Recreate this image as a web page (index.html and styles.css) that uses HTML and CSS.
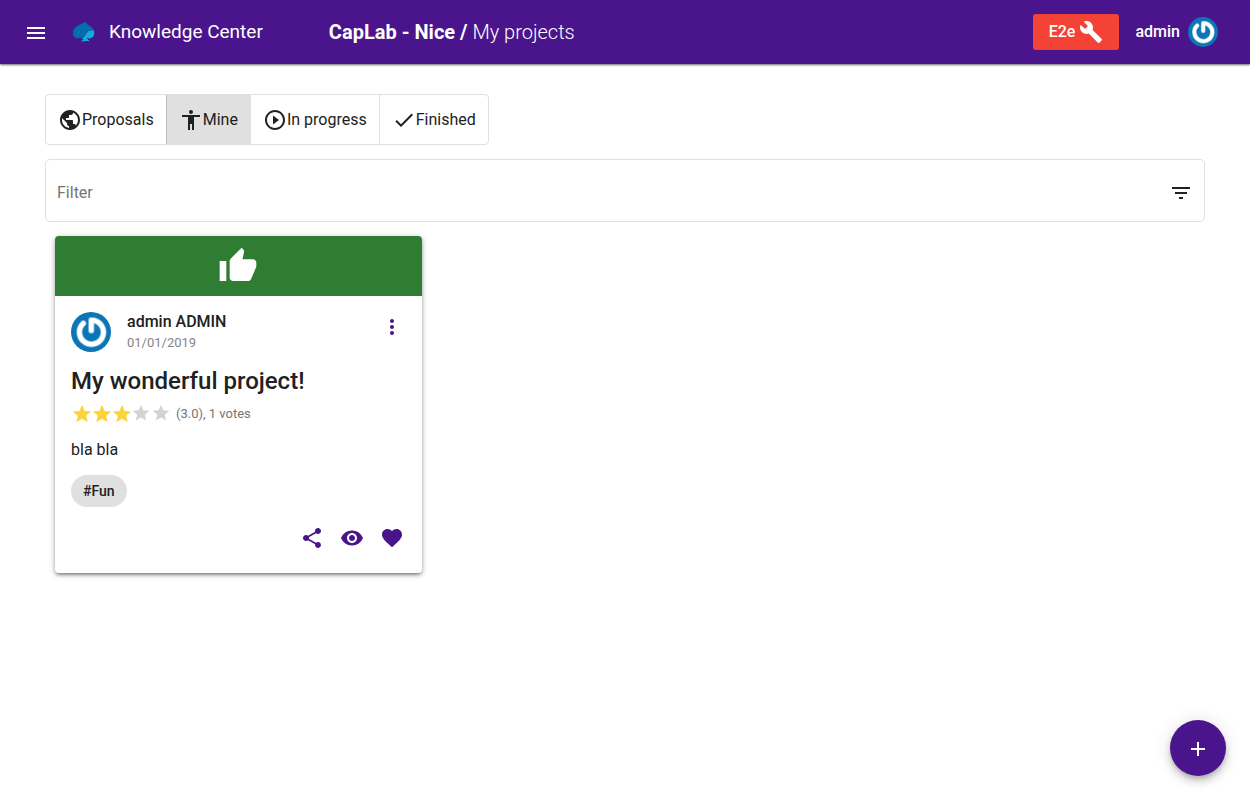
FILE: index.html
```
<!DOCTYPE html>
<html lang="en">
<head>
<meta charset="utf-8">
<title>CapLab - Nice / My projects</title>
<link rel="stylesheet" href="styles.css">
</head>
<body>
<svg class="defs" aria-hidden="true">
  <symbol id="star" viewBox="0 0 24 24"><path d="M12 17.27L18.18 21l-1.64-7.03L22 9.24l-7.19-.61L12 2 9.19 8.63 2 9.24l5.46 4.73L5.82 21z"/></symbol>
  <symbol id="avatar" viewBox="0 0 40 40">
    <circle cx="20" cy="20" r="20" fill="#0a76b6"/>
    <g fill="none" stroke-linecap="round" stroke-linejoin="round">
      <path stroke="#7db6da" stroke-width="6.4" d="M12.300 11.400A12 12 0 1 0 20.300 8.200V18.500"/>
      <path stroke="#fff" stroke-width="4.600" d="M12.300 11.400A12 12 0 1 0 20.300 8.200V18.500"/>
    </g>
  </symbol>
</svg>
<header class="topbar">
  <button class="icon-button menu-button" aria-label="Menu"><svg class="icon" viewBox="0 0 24 24"><path d="M3 18h18v-2H3v2zm0-5h18v-2H3v2zm0-7v2h18V6H3z"/></svg></button>
  <a class="brand" href="#">
    <svg class="brand-logo" viewBox="0 0 22 20">
      <path fill="#0070ad" d="M11.700 0C8 3 0 4.200 0 11c0 3.600 2.600 5.700 5.800 5.300C9 15.900 12 13.700 13 11c1.500-2.500 4.500-3.500 7.700-2.800C19.300 4.600 14.600 3 11.700 0z"/>
      <path fill="#12abdb" d="M21 8.600c-3.800-1.100-6.900.7-8 3.200-.9 2.200-2.600 3.800-4.800 5l2.300.3c-.4.800-1.100 1.400-2 1.900v.5c2.500-.7 5-.7 7.800-.3v-.6c-1.300-.8-2-1.700-2.200-3 .8.700 1.800.9 2.800.8 2.400-.2 4.100-2 4.300-4.500.1-1.200 0-2.300-.2-3.300z"/>
    </svg>
    <span>Knowledge Center</span>
  </a>
  <h1 class="page-title"><b>CapLab - Nice /</b> My projects</h1>
  <button class="env-button">E2e<svg class="icon" viewBox="0 0 24 24"><path d="M22.700 19l-9.100-9.100c.9-2.300.4-5-1.500-6.900-2-2-5-2.400-7.400-1.300L9 6 6 9 1.600 4.700C.4 7.100.9 10.100 2.900 12.100c1.900 1.900 4.600 2.400 6.900 1.500l9.100 9.100c.4.400 1 .4 1.400 0l2.300-2.300c.5-.4.5-1.100.1-1.400z"/></svg></button>
  <button class="user-button">admin<svg class="user-avatar"><use href="#avatar"/></svg></button>
</header>
<main class="content">
  <nav class="tabs">
    <button class="tab"><svg class="icon" viewBox="0 0 24 24"><path d="M12 2C6.480 2 2 6.480 2 12s4.480 10 10 10 10-4.480 10-10S17.520 2 12 2zm-1 17.930c-3.950-.49-7-3.850-7-7.930 0-.62.08-1.210.21-1.790L9 15v1c0 1.100.9 2 2 2v1.930zm6.900-2.540c-.26-.81-1-1.390-1.900-1.390h-1v-3c0-.55-.45-1-1-1H8v-2h2c.55 0 1-.45 1-1V7h2c1.100 0 2-.9 2-2v-.41c2.930 1.190 5 4.060 5 7.410 0 2.080-.8 3.970-2.100 5.390z"/></svg>Proposals</button>
    <button class="tab tab-active" aria-pressed="true"><svg class="icon" viewBox="0 0 24 24"><path d="M12 2c1.100 0 2 .9 2 2s-.9 2-2 2-2-.9-2-2 .9-2 2-2zm9 7h-6v13h-2v-6h-2v6H9V9H3V7h18v2z"/></svg>Mine</button>
    <button class="tab"><svg class="icon" viewBox="0 0 24 24"><path d="M10 16.500l6-4.500-6-4.500v9zM12 2C6.480 2 2 6.480 2 12s4.480 10 10 10 10-4.480 10-10S17.520 2 12 2zm0 18c-4.410 0-8-3.590-8-8s3.590-8 8-8 8 3.590 8 8-3.590 8-8 8z"/></svg>In progress</button>
    <button class="tab"><svg class="icon" viewBox="0 0 24 24"><path d="M9 16.200L4.800 12l-1.400 1.400L9 19 21 7l-1.400-1.400L9 16.200z"/></svg>Finished</button>
  </nav>
  <div class="filter">
    <input class="filter-input" type="text" placeholder="Filter" aria-label="Filter">
    <button class="icon-button" aria-label="Filter options"><svg class="icon" viewBox="0 0 24 24"><path d="M10 18h4v-2h-4v2zM3 6v2h18V6H3zm3 7h12v-2H6v2z"/></svg></button>
  </div>
  <div class="cards">
    <article class="card">
      <div class="card-banner"><svg class="banner-icon" viewBox="0 0 24 24"><path d="M1 21h4V9H1v12zm22-11c0-1.100-.9-2-2-2h-6.310l.95-4.570.03-.32c0-.41-.17-.79-.44-1.060L14.170 1 7.590 7.590C7.220 7.950 7 8.450 7 9v10c0 1.100.9 2 2 2h9c.83 0 1.540-.5 1.840-1.220l3.020-7.050c.09-.23.14-.47.14-.73v-2z"/></svg></div>
      <div class="card-body">
        <div class="author">
          <svg class="author-avatar"><use href="#avatar"/></svg>
          <div class="author-text"><div class="author-name">admin ADMIN</div><div class="author-date">01/01/2019</div></div>
          <button class="icon-button accent more-button" aria-label="More"><svg class="icon" viewBox="0 0 24 24"><path d="M12 8c1.100 0 2-.9 2-2s-.9-2-2-2-2 .9-2 2 .9 2 2 2zm0 2c-1.100 0-2 .9-2 2s.9 2 2 2 2-.9 2-2-.9-2-2-2zm0 6c-1.100 0-2 .9-2 2s.9 2 2 2 2-.9 2-2-.9-2-2-2z"/></svg></button>
        </div>
        <h2 class="card-title">My wonderful project!</h2>
        <div class="rating">
          <svg class="star-on"><use href="#star"/></svg><svg class="star-on"><use href="#star"/></svg><svg class="star-on"><use href="#star"/></svg><svg class="star-off"><use href="#star"/></svg><svg class="star-off"><use href="#star"/></svg>
          <span class="votes">(3.0), 1 votes</span>
        </div>
        <p class="description">bla bla</p>
        <span class="chip">#Fun</span>
        <div class="actions">
          <button class="icon-button accent" aria-label="Share"><svg class="icon" viewBox="0 0 24 24"><path d="M18 16.080c-.76 0-1.440.3-1.960.77L8.910 12.700c.05-.23.09-.46.09-.7s-.04-.47-.09-.7l7.050-4.110c.54.5 1.250.81 2.040.81 1.660 0 3-1.340 3-3s-1.340-3-3-3-3 1.340-3 3c0 .24.04.47.09.7L8.040 9.810C7.500 9.310 6.790 9 6 9c-1.660 0-3 1.340-3 3s1.340 3 3 3c.79 0 1.500-.31 2.040-.81l7.120 4.160c-.05.21-.08.43-.08.65 0 1.610 1.310 2.920 2.920 2.920s2.920-1.310 2.920-2.920-1.310-2.920-2.920-2.920z"/></svg></button>
          <button class="icon-button accent" aria-label="View"><svg class="icon" viewBox="0 0 24 24"><path d="M12 4.500C7 4.500 2.730 7.610 1 12c1.730 4.390 6 7.500 11 7.500s9.270-3.110 11-7.500c-1.730-4.390-6-7.500-11-7.500zM12 17c-2.760 0-5-2.240-5-5s2.240-5 5-5 5 2.240 5 5-2.240 5-5 5zm0-8c-1.660 0-3 1.340-3 3s1.340 3 3 3 3-1.340 3-3-1.340-3-3-3z"/></svg></button>
          <button class="icon-button accent" aria-label="Like"><svg class="icon" viewBox="0 0 24 24"><path d="M12 21.350l-1.450-1.320C5.400 15.360 2 12.280 2 8.500 2 5.420 4.420 3 7.500 3c1.740 0 3.410.81 4.500 2.090C13.090 3.810 14.760 3 16.500 3 19.580 3 22 5.420 22 8.500c0 3.780-3.400 6.860-8.550 11.540L12 21.350z"/></svg></button>
        </div>
      </div>
    </article>
  </div>
</main>
<button class="fab" aria-label="Add project"><svg class="icon" viewBox="0 0 24 24"><path d="M19 13h-6v6h-2v-6H5v-2h6V5h2v6h6v2z"/></svg></button>
</body>
</html>
```
FILE: styles.css
```
* { box-sizing: border-box; }
body {
  margin: 0;
  background: #fff;
  color: #212121;
  font: 16px/24px Roboto, sans-serif;
}
button {
  border: 0;
  padding: 0;
  background: none;
  color: inherit;
  font: inherit;
  cursor: pointer;
}
svg { display: block; flex: none; fill: currentColor; }
.defs { position: absolute; width: 0; height: 0; }
.icon { width: 24px; height: 24px; }
.icon-button { display: grid; place-items: center; width: 40px; height: 40px; }
.accent { color: #4a148c; }

.topbar {
  display: flex;
  align-items: center;
  height: 64px;
  padding: 0 32px 0 16px;
  background: #4a148c;
  color: #fff;
  box-shadow: 0 1px 2px rgba(0, 0, 0, .6);
}
.menu-button { padding-top: 2px; }
.brand {
  display: flex;
  align-items: center;
  gap: 14px;
  margin-left: 17px;
  color: #fff;
  font-size: 19px;
  text-decoration: none;
}
.brand-logo { width: 22px; height: 20px; }
.page-title { margin: 0 auto 0 66px; font-size: 20px; font-weight: 300; }
.page-title b { font-weight: 700; }
.env-button {
  display: flex;
  align-items: center;
  gap: 4px;
  height: 36px;
  padding: 0 16px;
  border-radius: 3px;
  background: #f44336;
  font-weight: 500;
}
.user-button {
  display: flex;
  align-items: center;
  gap: 8px;
  margin-left: 16px;
  font-weight: 500;
}
.user-avatar { width: 30px; height: 30px; }

.content { padding: 30px 45px; }
.tabs {
  display: flex;
  width: fit-content;
  border: 1px solid #e0e0e0;
  border-radius: 4px;
  overflow: hidden;
}
.tab {
  display: flex;
  align-items: center;
  height: 49px;
  padding: 0 12px;
}
.tab + .tab { border-left: 1px solid #e0e0e0; }
.tab + .tab-active { border-left-color: #bdbdbd; background: #e0e0e0; }

.filter {
  display: flex;
  align-items: center;
  margin-top: 14px;
  height: 63px;
  padding: 4px 3px 0 11px;
  border: 1px solid #e0e0e0;
  border-radius: 5px;
}
.filter-input {
  flex: 1;
  min-width: 0;
  padding: 0;
  border: 0;
  outline: 0;
  font: inherit;
}
.filter-input::placeholder { color: #757575; opacity: 1; }

.cards {
  display: grid;
  grid-template-columns: repeat(3, 1fr);
  gap: 20px;
  padding: 14px 10px;
}
.card {
  border-radius: 4px;
  background: #fff;
  overflow: hidden;
  box-shadow: 0 3px 3px -2px rgba(0, 0, 0, .3), 0 2px 4px rgba(0, 0, 0, .3), 0 1px 8px rgba(0, 0, 0, .12);
}
.card-banner {
  display: grid;
  place-items: center;
  height: 60px;
  background: #2e7d32;
  color: #fff;
}
.banner-icon { width: 40px; height: 40px; }
.card-body { padding: 16px 10px 15px 16px; }
.author { display: flex; gap: 16px; height: 40px; }
.author-avatar { width: 40px; height: 40px; }
.author-text { flex: 1; }
.author-name { font-weight: 500; line-height: 20px; }
.author-date { color: #858585; font-size: 13px; line-height: 21px; }
.more-button { height: 30px; }
.card-title {
  margin: 13px 0 0;
  font-size: 24px;
  font-weight: 500;
  line-height: 32px;
}
.rating { display: flex; height: 22px; margin-top: 6px; }
.star-on { width: 22px; height: 22px; margin-right: -2px; color: #fdd33c; }
.star-off { width: 20px; height: 20px; color: #d3d3d3; }
.votes { margin-left: 5px; color: #757575; font-size: 13px; line-height: 21px; }
.description { margin: 13px 0; }
.chip {
  display: inline-block;
  padding: 0 12px;
  border-radius: 16px;
  background: #e0e0e0;
  font-size: 14px;
  font-weight: 500;
  line-height: 32px;
}
.actions { display: flex; justify-content: flex-end; margin-top: 11px; }
.fab {
  position: fixed;
  right: 24px;
  bottom: 24px;
  display: grid;
  place-items: center;
  width: 56px;
  height: 56px;
  padding-top: 2px;
  border-radius: 50%;
  background: #4a148c;
  color: #fff;
  box-shadow: 0 3px 5px -1px rgba(0, 0, 0, .2), 0 6px 10px rgba(0, 0, 0, .14), 0 1px 18px rgba(0, 0, 0, .12);
}
```
